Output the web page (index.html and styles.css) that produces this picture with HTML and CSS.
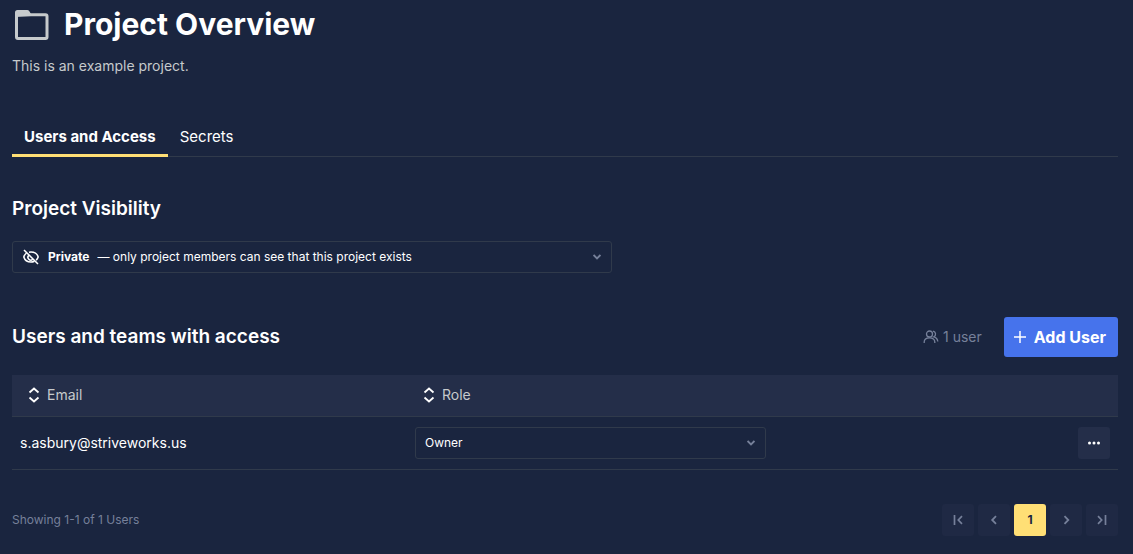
FILE: index.html
```html
<!DOCTYPE html>
<html lang="en">

<head>
    <meta charset="UTF-8">
    <meta name="viewport" content="width=device-width, initial-scale=1.0">
    <title>Project Overview</title>
    <link rel="stylesheet" href="styles.css">
</head>

<body>
    <!-- Project title -->
    <header class="page-header">
        <div class="title-row">
            <svg class="folder-icon" width="40" height="40" viewBox="0 0 40 40" fill="none" stroke="currentColor" stroke-width="3">
                <rect x="4.500" y="10.800" width="30.500" height="23.700" rx="1.500" />
                <path d="M3 13V8.500A2.500 2.500 0 0 1 5.500 6h9.700a2.500 2.500 0 0 1 2 1L19 10v2z" fill="currentColor" stroke="none" />
            </svg>
            <h1>Project Overview</h1>
        </div>
        <p class="description">This is an example project.</p>
    </header>

    <!-- Tabs -->
    <nav class="tabs">
        <a class="tab tab-active" href="#users">Users and Access</a>
        <a class="tab" href="#secrets">Secrets</a>
    </nav>

    <main>
        <section class="visibility">
            <h2>Project Visibility</h2>
            <div class="select-box visibility-box">
                <svg class="eye-icon" width="16" height="16" viewBox="0 0 16 16" fill="none" stroke="currentColor" stroke-width="1.500">
                    <path d="M1 1l14 14" />
                    <path d="M3.500 4C2.200 5 1.200 6.300.8 8c.9 3 3.800 5 7.200 5 1.300 0 2.400-.3 3.500-.8" />
                    <path d="M6 3.200C6.600 3.100 7.300 3 8 3c3.400 0 6.300 2 7.200 5-.4 1.200-1.100 2.300-2.100 3.100" />
                    <path d="M5.800 6.200a2.800 2.800 0 0 0 4 4" />
                </svg>
                <label for="visibility">Private</label>
                <select id="visibility">
                    <option>— only project members can see that this project exists</option>
                </select>
                <svg class="chevron" width="8" height="6" viewBox="0 0 8 6" fill="none" stroke="currentColor" stroke-width="1.800">
                    <path d="M.6 1L4 4.400 7.400 1" />
                </svg>
            </div>
        </section>

        <section id="users">
            <div class="section-head">
                <h2>Users and teams with access</h2>
                <span class="user-count">
                    <svg width="16" height="16" viewBox="0 0 16 16" fill="none" stroke="currentColor" stroke-width="1.300">
                        <circle cx="6.500" cy="5" r="3" />
                        <path d="M1.200 14v-1c0-2.500 2-4.200 5.300-4.200s5.300 1.700 5.300 4.200v1" />
                        <path d="M10 2.100a3 3 0 0 1 .8 5.700c2.200.6 3.700 2 4 4.700" />
                    </svg>
                    1 user
                </span>
                <button class="add-button" type="button">
                    <svg width="12" height="12" viewBox="0 0 12 12" fill="none" stroke="currentColor" stroke-width="1.500">
                        <path d="M6 0v12M0 6h12" />
                    </svg>
                    Add User
                </button>
            </div>

            <table class="users-table">
                <thead>
                    <tr>
                        <th class="col-email" scope="col">
                            <button class="sort-button" type="button">
                                <svg width="12" height="16" viewBox="0 0 12 16" fill="none" stroke="currentColor" stroke-width="1.800">
                                    <path d="M1.500 5.500L6 1.500l4.500 4M1.500 10.500l4.500 4 4.500-4" />
                                </svg>
                                Email
                            </button>
                        </th>
                        <th class="col-role" scope="col">
                            <button class="sort-button" type="button">
                                <svg width="12" height="16" viewBox="0 0 12 16" fill="none" stroke="currentColor" stroke-width="1.800">
                                    <path d="M1.500 5.500L6 1.500l4.500 4M1.500 10.500l4.500 4 4.500-4" />
                                </svg>
                                Role
                            </button>
                        </th>
                        <td></td>
                    </tr>
                </thead>
                <tbody>
                    <tr>
                        <td>s.asbury@striveworks.us</td>
                        <td>
                            <div class="select-box">
                                <select aria-label="Role">
                                    <option>Owner</option>
                                </select>
                                <svg class="chevron" width="8" height="6" viewBox="0 0 8 6" fill="none" stroke="currentColor" stroke-width="1.800">
                                    <path d="M.6 1L4 4.400 7.400 1" />
                                </svg>
                            </div>
                        </td>
                        <td>
                            <button class="icon-button" type="button" aria-label="More actions">
                                <svg width="12" height="4" viewBox="0 0 12 4" fill="currentColor">
                                    <circle cx="1.500" cy="2" r="1.500" />
                                    <circle cx="6" cy="2" r="1.500" />
                                    <circle cx="10.500" cy="2" r="1.500" />
                                </svg>
                            </button>
                        </td>
                    </tr>
                </tbody>
            </table>

            <footer class="table-footer">
                <span>Showing 1-1 of 1 Users</span>
                <nav class="pagination" aria-label="Pagination">
                    <button class="page-button" type="button" aria-label="First page">
                        <svg width="10" height="10" viewBox="0 0 10 10" fill="none" stroke="currentColor" stroke-width="1.700">
                            <path d="M1.500 0v10M9 1.200L5.300 5 9 8.800" />
                        </svg>
                    </button>
                    <button class="page-button" type="button" aria-label="Previous page">
                        <svg width="10" height="10" viewBox="0 0 10 10" fill="none" stroke="currentColor" stroke-width="1.800">
                            <path d="M7 1.200L3.200 5 7 8.800" />
                        </svg>
                    </button>
                    <button class="page-button page-current" type="button" aria-current="page">1</button>
                    <button class="page-button" type="button" aria-label="Next page">
                        <svg width="10" height="10" viewBox="0 0 10 10" fill="none" stroke="currentColor" stroke-width="1.800">
                            <path d="M3.500 1.200L7.300 5 3.500 8.800" />
                        </svg>
                    </button>
                    <button class="page-button" type="button" aria-label="Last page">
                        <svg width="10" height="10" viewBox="0 0 10 10" fill="none" stroke="currentColor" stroke-width="1.700">
                            <path d="M8.500 0v10M1 1.200L4.700 5 1 8.800" />
                        </svg>
                    </button>
                </nav>
            </footer>
        </section>
    </main>
</body>

</html>
```
FILE: styles.css
```css
* {
    margin: 0;
    padding: 0;
    box-sizing: border-box;
}

body {
    padding: 4px 15px 16px 12px;
    background-color: #1a253f;
    color: #fff;
    font-family: Inter, "Liberation Sans", sans-serif;
    font-size: 14px;
    line-height: 20px;
}

button,
select {
    border: none;
    background: none;
    color: inherit;
    font: inherit;
    cursor: pointer;
}

svg {
    flex: none;
    display: block;
}

h1 {
    font-size: 30px;
    line-height: 40px;
    font-weight: 700;
}

h2 {
    font-size: 19px;
    line-height: 24px;
    font-weight: 600;
}

/* Header */
.title-row {
    display: flex;
    align-items: center;
    gap: 12px;
}

.folder-icon {
    color: #c6cacc;
}

.description {
    margin-top: 12px;
    color: #c6cacc;
}

/* Tabs */
.tabs {
    display: flex;
    margin-top: 40px;
    border-bottom: 1px solid #303a4b;
}

.tab {
    margin-bottom: -1px;
    padding: 11px 12px 7px;
    border-bottom: 3px solid transparent;
    color: #fff;
    font-size: 15px;
    text-decoration: none;
}

.tab-active {
    border-color: #ffdf75;
    font-weight: 700;
}

/* Drop-downs */
.select-box {
    display: flex;
    align-items: center;
    position: relative;
    height: 32px;
    border: 1px solid #303a4b;
    border-radius: 3px;
    font-size: 12px;
}

.select-box select {
    flex: 1;
    min-width: 0;
    height: 100%;
    padding: 0 32px 0 9px;
    appearance: none;
    outline: none;
}

.select-box option {
    background-color: #242e49;
}

.chevron {
    position: absolute;
    right: 10px;
    color: #76809a;
    pointer-events: none;
}

.visibility {
    margin: 40px 0 44px;
}

.visibility-box {
    max-width: 600px;
    margin-top: 20px;
    padding-left: 10px;
}

.visibility-box label {
    margin-left: 9px;
    font-weight: 700;
}

.visibility-box select {
    padding-left: 8px;
}

/* Users */
.section-head {
    display: flex;
    align-items: center;
}

.user-count {
    display: flex;
    align-items: center;
    gap: 4px;
    margin: 0 22px 0 auto;
    color: #76809a;
}

.add-button {
    display: flex;
    align-items: center;
    gap: 8px;
    height: 40px;
    padding: 0 12px 0 10px;
    border-radius: 3px;
    background-color: #4673ec;
    font-size: 16px;
    font-weight: 700;
}

.users-table {
    width: 100%;
    margin-top: 18px;
    border-collapse: collapse;
    table-layout: fixed;
}

.users-table tr {
    border-bottom: 1px solid #303a4b;
}

.users-table thead {
    background-color: #242e49;
}

.users-table th {
    height: 41px;
    padding: 0 16px;
    font-weight: 400;
}

.users-table td {
    padding: 10px 8px;
}

.col-email {
    width: 395px;
}

.col-role {
    width: 367px;
}

.sort-button {
    display: flex;
    align-items: center;
    gap: 7px;
    color: #c6cacc;
}

.sort-button svg {
    color: #fff;
}

.icon-button {
    display: flex;
    align-items: center;
    justify-content: center;
    width: 32px;
    height: 32px;
    margin-left: auto;
    border-radius: 3px;
    background-color: #242e49;
}

/* Footer */
.table-footer {
    display: flex;
    align-items: center;
    justify-content: space-between;
    margin-top: 34px;
    color: #76809a;
    font-size: 12px;
}

.pagination {
    display: flex;
    gap: 4px;
}

.page-button {
    display: flex;
    align-items: center;
    justify-content: center;
    width: 32px;
    height: 32px;
    border-radius: 3px;
    background-color: #1f2944;
    color: #76809a;
}

.page-current {
    background-color: #ffdf75;
    color: #1a253f;
    font-weight: 700;
}
```
